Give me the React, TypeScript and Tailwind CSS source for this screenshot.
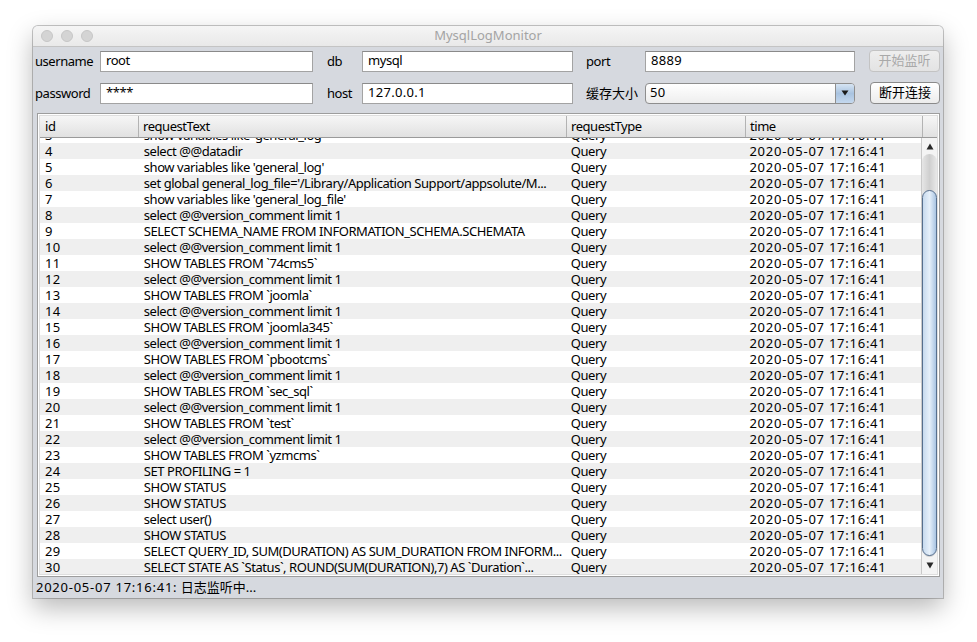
import React from "react";

const rows: [number, string][] = [
  [3, "show variables like 'general_log'"],
  [4, "select @@datadir"],
  [5, "show variables like 'general_log'"],
  [6, "set global general_log_file='/Library/Application Support/appsolute/M..."],
  [7, "show variables like 'general_log_file'"],
  [8, "select @@version_comment limit 1"],
  [9, "SELECT SCHEMA_NAME FROM INFORMATION_SCHEMA.SCHEMATA"],
  [10, "select @@version_comment limit 1"],
  [11, "SHOW TABLES FROM `74cms5`"],
  [12, "select @@version_comment limit 1"],
  [13, "SHOW TABLES FROM `joomla`"],
  [14, "select @@version_comment limit 1"],
  [15, "SHOW TABLES FROM `joomla345`"],
  [16, "select @@version_comment limit 1"],
  [17, "SHOW TABLES FROM `pbootcms`"],
  [18, "select @@version_comment limit 1"],
  [19, "SHOW TABLES FROM `sec_sql`"],
  [20, "select @@version_comment limit 1"],
  [21, "SHOW TABLES FROM `test`"],
  [22, "select @@version_comment limit 1"],
  [23, "SHOW TABLES FROM `yzmcms`"],
  [24, "SET PROFILING = 1"],
  [25, "SHOW STATUS"],
  [26, "SHOW STATUS"],
  [27, "select user()"],
  [28, "SHOW STATUS"],
  [29, "SELECT QUERY_ID, SUM(DURATION) AS SUM_DURATION FROM INFORM..."],
  [30, "SELECT STATE AS `Status`, ROUND(SUM(DURATION),7) AS `Duration`..."],
];

function Field({ value, width, wide }: { value: string; width: string; wide?: boolean }) {
  return (
    <div
      className={`${width} h-[21px] bg-white border border-[#a3a3a3] border-t-[#8a8a8a] flex items-center px-[5px] text-[13px] text-black ${
        wide ? "tracking-[0.3px]" : ""
      }`}
    >
      {value}
    </div>
  );
}

function Label({ text, width, cjk }: { text: string; width: string; cjk?: boolean }) {
  return (
    <div className={`${width} text-[13px] text-black leading-none ${cjk ? "tracking-normal" : ""}`}>
      {text}
    </div>
  );
}

export default function App() {
  return (
    <div className="min-h-screen bg-white pt-[26px] pl-[33px] tracking-[-0.45px] font-['Noto_Sans','Noto_Sans_CJK_SC',sans-serif]">
      <div className="w-[910px] h-[572px] flex flex-col rounded-t-[5px] overflow-hidden bg-[#d6d9df] shadow-[0_0_0_1px_rgba(0,0,0,0.22),0_10px_26px_rgba(0,0,0,0.28)]">
        {/* title bar */}
        <div className="h-[21px] relative flex items-center bg-gradient-to-b from-[#f5f5f5] to-[#e9e9e9] border-b border-[#c4c4c4]">
          <div className="flex gap-[8px] pl-[8px]">
            <span className="w-[12px] h-[12px] rounded-full bg-[#d4d4d4] border border-[#c6c6c6]" />
            <span className="w-[12px] h-[12px] rounded-full bg-[#d4d4d4] border border-[#c6c6c6]" />
            <span className="w-[12px] h-[12px] rounded-full bg-[#d4d4d4] border border-[#c6c6c6]" />
          </div>
          <div className="absolute inset-0 flex items-center justify-center text-[13px] text-[#a4a4a4] tracking-normal">
            MysqlLogMonitor
          </div>
        </div>

        {/* form */}
        <div className="pt-[3px] flex flex-col gap-[10px]">
          <div className="h-[22px] flex items-center pl-[2px]">
            <Label text="username" width="w-[65px]" />
            <Field value="root" width="w-[213px]" />
            <div className="w-[14px]" />
            <Label text="db" width="w-[35px]" />
            <Field value="mysql" width="w-[211px]" />
            <div className="w-[13px]" />
            <Label text="port" width="w-[59px]" />
            <Field value="8889" width="w-[210px]" wide />
            <div className="w-[14px]" />
            <div className="w-[71px] h-[22px] rounded-[4px] border border-[#c3c3c3] bg-gradient-to-b from-[#eeeeee] to-[#e3e3e3] flex items-center justify-center text-[13px] text-[#a9a9a9] tracking-normal">
              开始监听
            </div>
          </div>
          <div className="h-[22px] flex items-center pl-[2px]">
            <Label text="password" width="w-[65px]" />
            <Field value="****" width="w-[213px]" />
            <div className="w-[14px]" />
            <Label text="host" width="w-[35px]" />
            <Field value="127.0.0.1" width="w-[211px]" wide />
            <div className="w-[13px]" />
            <Label text="缓存大小" width="w-[59px]" cjk />
            <div className="w-[210px] h-[21px] rounded-[4px] border border-[#8e8e8e] bg-gradient-to-b from-[#ffffff] to-[#eeeeee] flex overflow-hidden">
              <div className="flex-1 flex items-center px-[4px] text-[13px] text-black tracking-[0.3px]">50</div>
              <div className="w-[19px] border-l border-[#8e8e8e] bg-gradient-to-b from-[#d6e4f3] via-[#a9c3e0] to-[#c4d8ee] flex items-center justify-center">
                <svg width="8" height="6" viewBox="0 0 8 6">
                  <path d="M0.5 0.5 L7.5 0.5 L4 5.5 Z" fill="#1a1a1a" />
                </svg>
              </div>
            </div>
            <div className="w-[15px]" />
            <div className="w-[70px] h-[22px] rounded-[4px] border border-[#8a8a8a] bg-gradient-to-b from-[#ffffff] to-[#ececec] flex items-center justify-center text-[13px] text-black tracking-normal">
              断开连接
            </div>
          </div>
        </div>

        {/* table */}
        <div className="mt-[9px] ml-[4px] w-[903px] h-[464px] border border-[#9d9d9d] bg-white flex flex-col">
          <div className="m-px flex-1 flex flex-col border border-[#dedede] overflow-hidden">
            <div className="h-[22px] flex bg-gradient-to-b from-[#f6f6f6] to-[#e1e1e1] border-b border-[#9a9a9a] text-[13px] text-black">
              <div className="w-[99px] border-r border-[#b3b3b3] flex items-center px-[5px]">id</div>
              <div className="w-[428px] border-r border-[#b3b3b3] flex items-center px-[4px]">requestText</div>
              <div className="w-[179px] border-r border-[#b3b3b3] flex items-center px-[4px]">requestType</div>
              <div className="w-[177px] border-r border-[#b3b3b3] flex items-center px-[4px]">time</div>
              <div className="flex-1" />
            </div>
            <div className="flex-1 flex overflow-hidden">
              <div className="w-[883px] overflow-hidden">
                <div className="-mt-[11px]">
                  {rows.map(([id, text]) => (
                    <div
                      key={id}
                      className={`h-[16px] flex text-[13px] text-black leading-[16px] whitespace-nowrap ${
                        id % 2 === 0 ? "bg-[#efefef]" : "bg-white"
                      }`}
                    >
                      <div className="w-[99px] px-[5px] tracking-[0.3px]">{id}</div>
                      <div className="w-[428px] pl-[5px] overflow-hidden">{text}</div>
                      <div className="w-[179px] px-[5px]">Query</div>
                      <div className="w-[177px] px-[5px] tracking-[0.75px]">2020-05-07 17:16:41</div>
                    </div>
                  ))}
                </div>
              </div>
              {/* scrollbar */}
              <div className="w-[16px] flex flex-col bg-[#f4f4f4] border-l border-[#c9c9c9]">
                <div className="h-[16px] flex items-center justify-center">
                  <svg width="8" height="7" viewBox="0 0 8 7">
                    <path d="M4 0.5 L7.5 6.5 L0.5 6.5 Z" fill="#2a2a2a" />
                  </svg>
                </div>
                <div className="flex-1 rounded-t-[8px] rounded-b-[8px] bg-gradient-to-r from-[#e6e6e6] via-[#cfcfcf] to-[#e9e9e9] flex flex-col pt-[36px] pb-px">
                  <div className="flex-1 rounded-[8px] border border-[#566f8e] bg-gradient-to-r from-[#c7daee] via-[#e6f0fa] to-[#a9c4e2]" />
                </div>
                <div className="h-[17px] flex items-center justify-center">
                  <svg width="8" height="7" viewBox="0 0 8 7">
                    <path d="M0.5 0.5 L7.5 0.5 L4 6.5 Z" fill="#2a2a2a" />
                  </svg>
                </div>
              </div>
            </div>
          </div>
        </div>

        {/* status */}
        <div className="flex-1 flex items-center pl-[3px] text-[13px] text-black">
          <span className="tracking-[0.75px]">2020-05-07 17:16:41:</span>
          <span className="tracking-normal">&nbsp;日志监听中...</span>
        </div>
      </div>
    </div>
  );
}
